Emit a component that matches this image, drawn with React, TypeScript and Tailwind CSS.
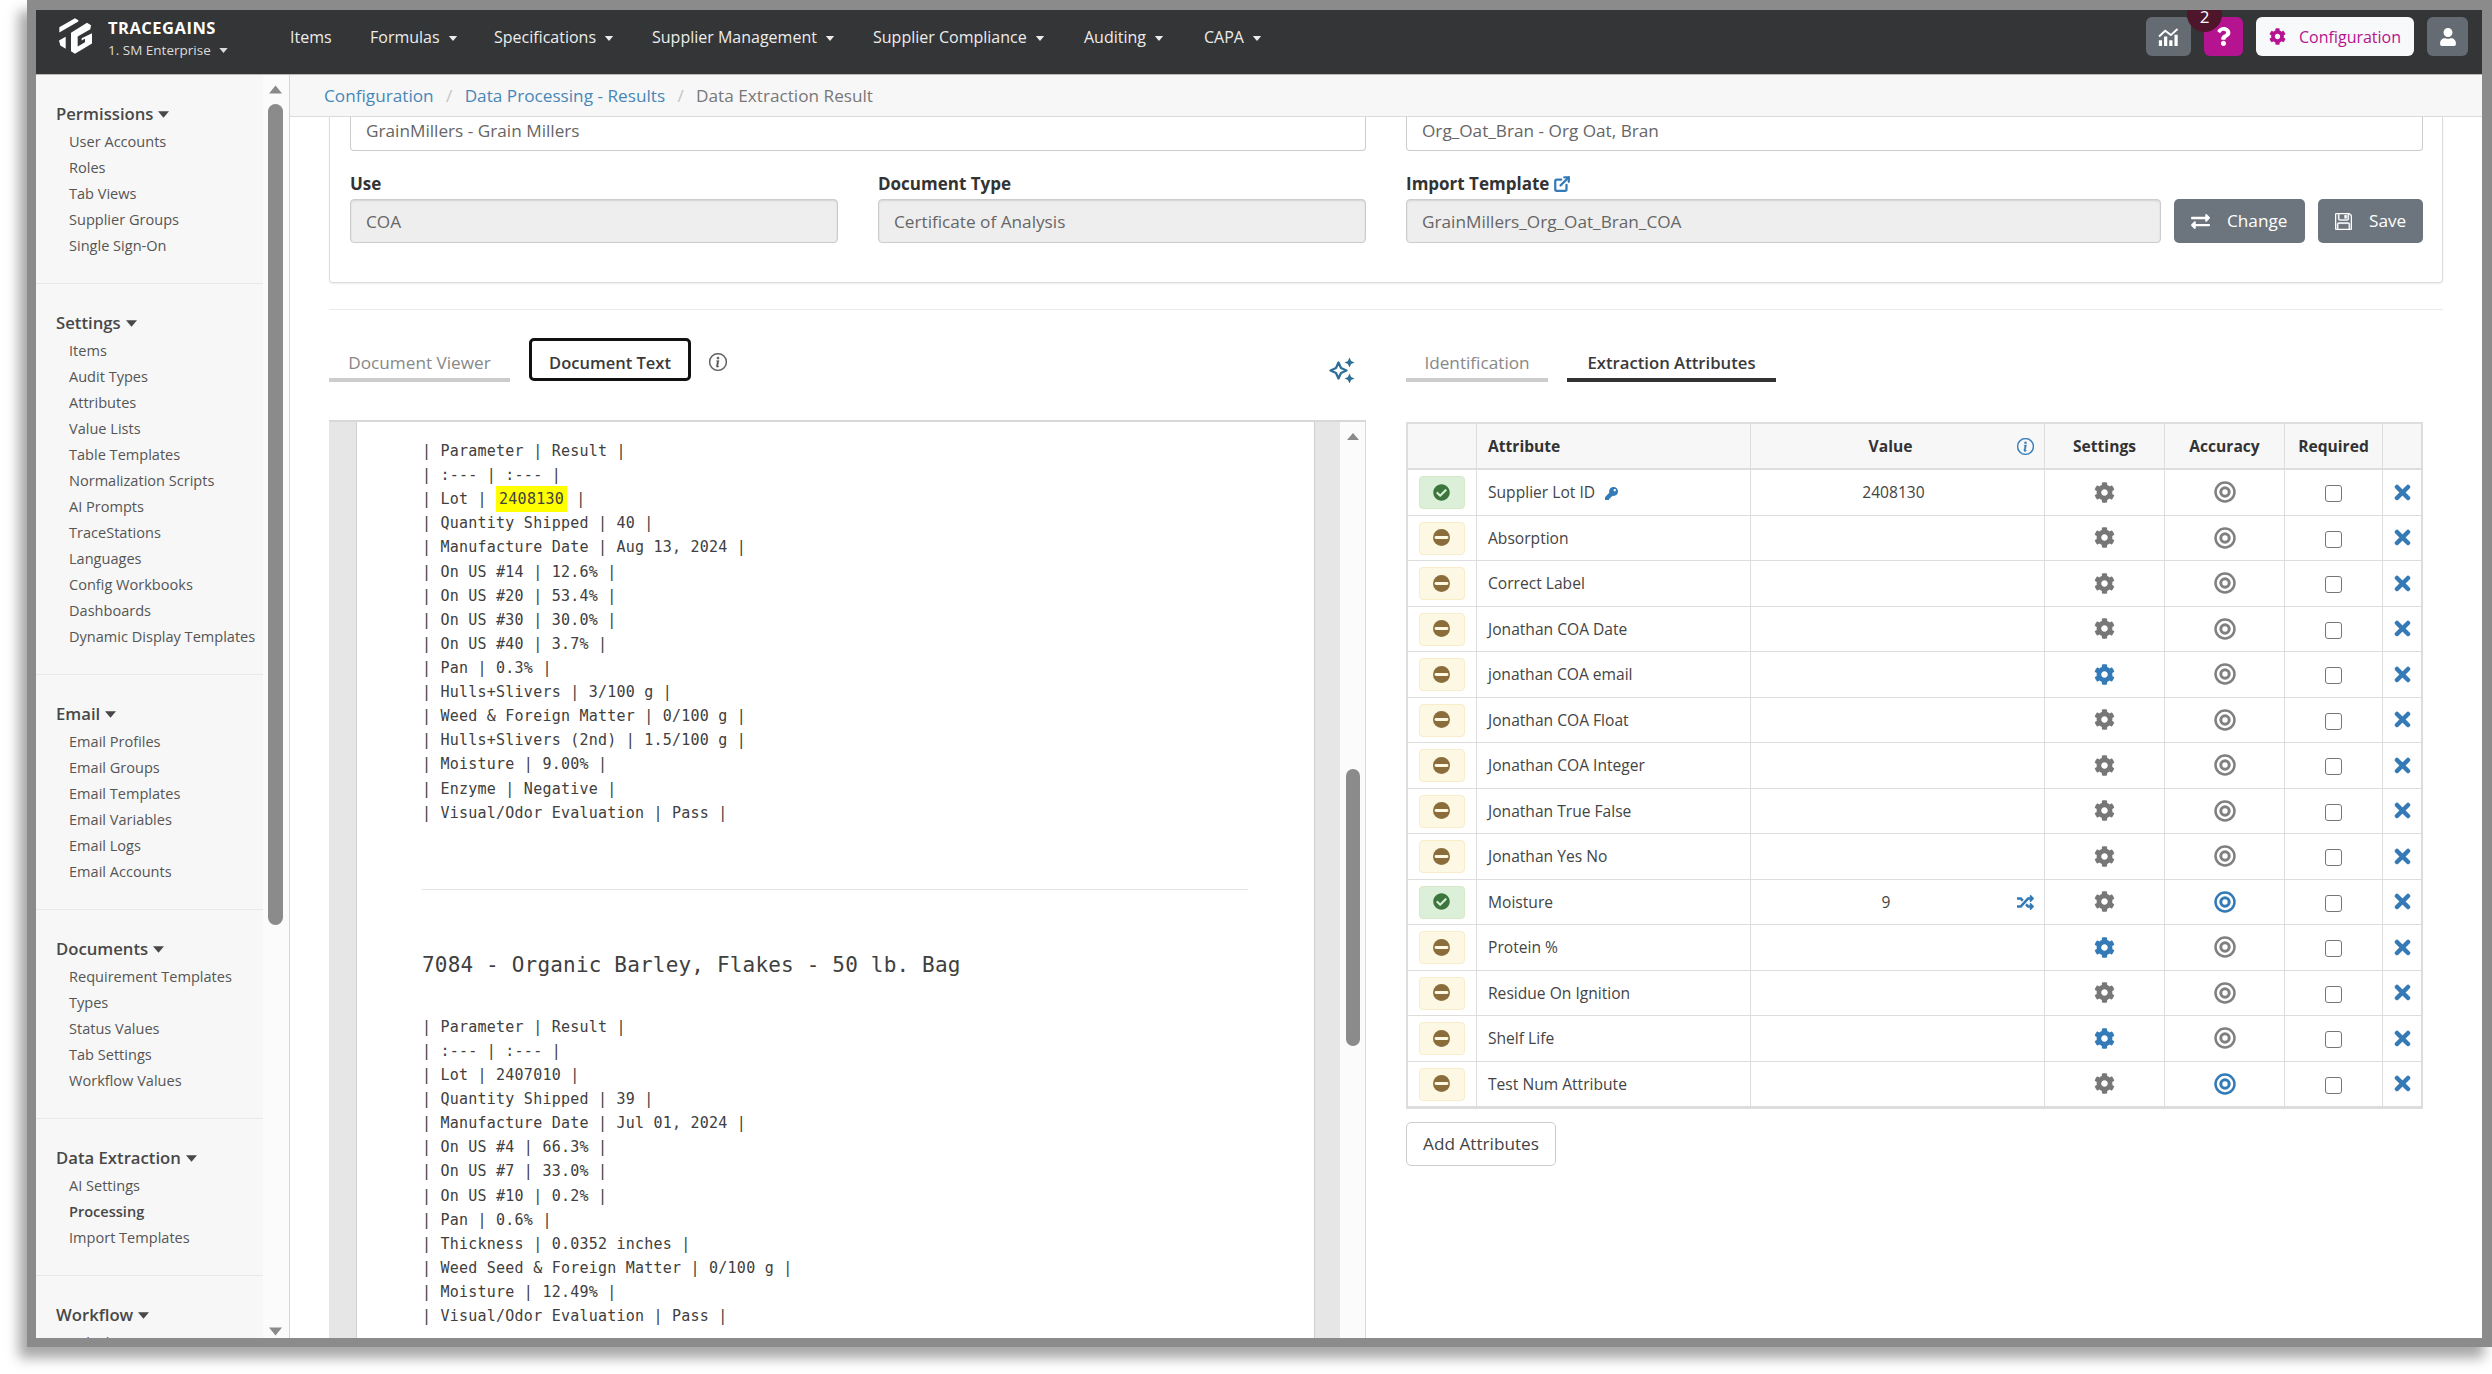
import { FaCog, FaCheckCircle, FaKey, FaQuestion, FaRandom, FaUser, FaExchangeAlt } from 'react-icons/fa'
import { BsFloppy, BsInfoCircle } from 'react-icons/bs'
import { FiExternalLink } from 'react-icons/fi'

const navItems = [
  { label: 'Items', caret: false, width: 'w-[80px]' },
  { label: 'Formulas', caret: true, width: 'w-[124px]' },
  { label: 'Specifications', caret: true, width: 'w-[158px]' },
  { label: 'Supplier Management', caret: true, width: 'w-[221px]' },
  { label: 'Supplier Compliance', caret: true, width: 'w-[211px]' },
  { label: 'Auditing', caret: true, width: 'w-[120px]' },
  { label: 'CAPA', caret: true, width: 'w-[80px]' },
]

const menu = [
  { title: 'Permissions', items: ['User Accounts', 'Roles', 'Tab Views', 'Supplier Groups', 'Single Sign-On'] },
  {
    title: 'Settings',
    items: [
      'Items',
      'Audit Types',
      'Attributes',
      'Value Lists',
      'Table Templates',
      'Normalization Scripts',
      'AI Prompts',
      'TraceStations',
      'Languages',
      'Config Workbooks',
      'Dashboards',
      'Dynamic Display Templates',
    ],
  },
  {
    title: 'Email',
    items: ['Email Profiles', 'Email Groups', 'Email Templates', 'Email Variables', 'Email Logs', 'Email Accounts'],
  },
  { title: 'Documents', items: ['Requirement Templates', 'Types', 'Status Values', 'Tab Settings', 'Workflow Values'] },
  { title: 'Data Extraction', items: ['AI Settings', 'Processing', 'Import Templates'] },
  { title: 'Workflow', items: ['Calculations'] },
]

const oatBranLines = [
  '| Quantity Shipped | 40 |',
  '| Manufacture Date | Aug 13, 2024 |',
  '| On US #14 | 12.6% |',
  '| On US #20 | 53.4% |',
  '| On US #30 | 30.0% |',
  '| On US #40 | 3.7% |',
  '| Pan | 0.3% |',
  '| Hulls+Slivers | 3/100 g |',
  '| Weed & Foreign Matter | 0/100 g |',
  '| Hulls+Slivers (2nd) | 1.5/100 g |',
  '| Moisture | 9.00% |',
  '| Enzyme | Negative |',
  '| Visual/Odor Evaluation | Pass |',
]

const barleyLines = [
  '| Parameter | Result |',
  '| :--- | :--- |',
  '| Lot | 2407010 |',
  '| Quantity Shipped | 39 |',
  '| Manufacture Date | Jul 01, 2024 |',
  '| On US #4 | 66.3% |',
  '| On US #7 | 33.0% |',
  '| On US #10 | 0.2% |',
  '| Pan | 0.6% |',
  '| Thickness | 0.0352 inches |',
  '| Weed Seed & Foreign Matter | 0/100 g |',
  '| Moisture | 12.49% |',
  '| Visual/Odor Evaluation | Pass |',
]

type Attribute = {
  name: string
  value?: string
  found?: boolean
  isKey?: boolean
  mapped?: boolean
  settingsOn?: boolean
  accuracyOn?: boolean
}

const attributes: Attribute[] = [
  { name: 'Supplier Lot ID', value: '2408130', found: true, isKey: true },
  { name: 'Absorption' },
  { name: 'Correct Label' },
  { name: 'Jonathan COA Date' },
  { name: 'jonathan COA email', settingsOn: true },
  { name: 'Jonathan COA Float' },
  { name: 'Jonathan COA Integer' },
  { name: 'Jonathan True False' },
  { name: 'Jonathan Yes No' },
  { name: 'Moisture', value: '9', found: true, mapped: true, accuracyOn: true },
  { name: 'Protein %', settingsOn: true },
  { name: 'Residue On Ignition' },
  { name: 'Shelf Life', settingsOn: true },
  { name: 'Test Num Attribute', accuracyOn: true },
]

const tableCols = 'grid grid-cols-[69px_274px_294px_120px_120px_98px_38px]'

function Caret({ className = '' }: { className?: string }) {
  return (
    <svg viewBox="0 0 10 6" className={className} fill="currentColor">
      <path d="M0 0h10L5 6z" />
    </svg>
  )
}

function Logo() {
  return (
    <svg viewBox="0 0 99 107" className="h-[36px] w-[33px]" fill="#fff">
      <path d="M1 27 48 0l10 6v4L1 43z" />
      <path d="M0 67 20 56v36L4 82z" />
      <path d="M36 44 84 14l12 7-2 12-38 22v30l22-13V62l-10 5V60l31-15v31L48 107l-12-8z" />
    </svg>
  )
}

function ChartIcon() {
  return (
    <svg viewBox="0 0 22 19" className="h-[18px] w-[21px]" fill="none" stroke="#fff">
      <path d="M1 9l6.500-6 6 4.500L20.500 1" strokeWidth="2" />
      <path d="M2.500 19v-6M8 19V9M13.500 19v-6M19 19V7" strokeWidth="3.400" />
    </svg>
  )
}

function Sparkles() {
  return (
    <svg viewBox="0 0 26 26" className="h-[26px] w-[26px] text-[#2f6f94]">
      <path d="M9.500 5.500 12 11l5.500 2.500L12 16l-2.500 5.500L7 16l-5.500-2.500L7 11z" fill="none" stroke="currentColor" strokeWidth="2.300" strokeLinejoin="round" />
      <path d="M20.500 0.500l1.600 3.400 3.400 1.600-3.400 1.600-1.600 3.400-1.600-3.400-3.400-1.600 3.400-1.600zM20.500 16.500l1.600 3.400 3.400 1.600-3.400 1.600-1.600 3.400-1.600-3.400-3.400-1.600 3.400-1.600z" fill="currentColor" />
    </svg>
  )
}

function MinusBadge() {
  return (
    <svg viewBox="0 0 17 17" className="h-[17px] w-[17px]">
      <circle cx="8.500" cy="8.500" r="8.500" fill="currentColor" />
      <path d="M3 8.500h11" stroke="#fcf8e3" strokeWidth="2.800" strokeLinecap="round" />
    </svg>
  )
}

function Target({ className }: { className: string }) {
  return (
    <svg viewBox="0 0 22 22" className={`h-[22px] w-[22px] ${className}`} fill="none" stroke="currentColor">
      <circle cx="11" cy="11" r="9.500" strokeWidth="2.500" />
      <circle cx="11" cy="11" r="4.200" strokeWidth="3" />
    </svg>
  )
}

function Remove() {
  return (
    <svg viewBox="0 0 16 16" className="h-[17px] w-[17px] text-[#337ab7]" stroke="currentColor" strokeWidth="4.200" strokeLinecap="round">
      <path d="M2.800 2.800l10.400 10.400M13.200 2.800L2.800 13.200" />
    </svg>
  )
}

function Header() {
  return (
    <header className="flex h-[65px] shrink-0 items-start border-b border-[#b9b9b9] bg-[#343536] text-white">
      <div className="flex w-[254px] pt-2 pl-[23px]">
        <Logo />
        <div className="pl-4">
          <p className="text-[16.500px] leading-[20px] font-bold tracking-[0.500px]">TRACEGAINS</p>
          <p className="flex items-center text-[13.500px] leading-[24px] text-[#dcdcdc]">
            1. SM Enterprise <Caret className="ml-[8px] h-[5px] w-[9px]" />
          </p>
        </div>
      </div>
      <nav className="flex pt-[14px]">
        {navItems.map((item) => (
          <a key={item.label} className={`flex items-center text-[16px] leading-[26px] whitespace-nowrap text-[#ececec] ${item.width}`}>
            {item.label}
            {item.caret && <Caret className="mt-[3px] ml-2 h-[5px] w-[10px]" />}
          </a>
        ))}
      </nav>
      <div className="ml-auto flex gap-[13px] pt-[7px] pr-[14px]">
        <button className="flex h-[39px] w-[45px] items-center justify-center rounded-[6px] bg-[#646b73]">
          <ChartIcon />
        </button>
        <div className="relative">
          <button className="flex h-[39px] w-[39px] items-center justify-center rounded-[6px] bg-[#b5138f]">
            <FaQuestion className="h-[19px] w-[19px]" />
          </button>
          <div className="absolute -top-[7px] -left-[17px] h-[22px] w-[35px] overflow-hidden">
            <div className="-mt-[13px] flex h-[35px] w-[35px] items-center justify-center rounded-full bg-[#4f152b] pt-[5px] text-[17px]">2</div>
          </div>
        </div>
        <button className="flex h-[39px] w-[158px] items-center rounded-[6px] bg-[#f8f9fa] pl-[13px] text-[16px] text-[#b5138f]">
          <FaCog className="mr-[13px] h-[17px] w-[17px]" />
          Configuration
        </button>
        <button className="flex h-[39px] w-[41px] items-center justify-center rounded-[6px] bg-[#646b73]">
          <FaUser className="h-[18px] w-[18px]" />
        </button>
      </div>
    </header>
  )
}

function Sidebar() {
  return (
    <aside className="flex w-[254px] shrink-0 border-r border-[#d5d5d5] bg-[#fbfbfb]">
      <div className="w-[227px] overflow-hidden bg-[#f7f7f7]">
        {menu.map((section) => (
          <section key={section.title} className="border-b border-[#e9e9e9] pt-[26px] pb-[25px] text-[#484848]">
            <h3 className="flex h-[27px] items-center pb-px pl-[20px] text-[16.700px] font-semibold whitespace-nowrap">
              {section.title}
              <Caret className="ml-[5px] h-[7px] w-[11px]" />
            </h3>
            {section.items.map((item) => (
              <a
                key={item}
                className={`block h-[26px] pl-[33px] text-[14.550px] leading-[26px] whitespace-nowrap ${item === 'Processing' ? 'font-semibold' : 'text-[#555]'}`}
              >
                {item}
              </a>
            ))}
          </section>
        ))}
      </div>
      <div className="flex flex-1 flex-col items-center pt-[10px] pr-px pb-[2px]">
        <Caret className="h-[9px] w-[13px] rotate-180 text-[#8a8a8a]" />
        <div className="mt-[10px] h-[821px] w-[15px] rounded-full bg-[#8b8b8b]" />
        <Caret className="mt-auto h-[9px] w-[13px] text-[#8a8a8a]" />
      </div>
    </aside>
  )
}

function Breadcrumb() {
  return (
    <div className="flex h-[42px] items-center border-b border-[#dcdcdc] bg-[#f7f7f7] pl-[34px] text-[17.200px] text-[#777]">
      <a className="text-[#4787b8]">Configuration</a>
      <span className="w-[31px] text-center text-[#c4c4c4]">/</span>
      <a className="text-[#4787b8]">Data Processing - Results</a>
      <span className="w-[31px] text-center text-[#c4c4c4]">/</span>
      <span>Data Extraction Result</span>
    </div>
  )
}

const readOnly = 'mt-[2px] flex h-[44px] items-center rounded-[4px] border border-[#ccc] bg-[#eee] px-[15px] pt-px text-[17.200px] text-[#666] shadow-[inset_0_1px_2px_rgba(0,0,0,0.12)]'
const openField = 'h-[34px] rounded-b-[4px] border border-t-0 border-[#ccc] px-[15px] text-[17.200px] leading-[27px] text-[#666]'
const actionButton = 'mt-[2px] flex h-[44px] items-center rounded-[5px] bg-[#6c757d] text-[17.200px] text-white'

function DocumentForm() {
  return (
    <div className="h-[166px] rounded-b-[4px] border border-t-0 border-[#ddd] px-5 shadow-[0_1px_2px_rgba(0,0,0,0.08)]">
      <div className="grid grid-cols-[1016px_1017px] gap-10">
        <div className={openField}>GrainMillers - Grain Millers</div>
        <div className={openField}>Org_Oat_Bran - Org Oat, Bran</div>
      </div>
      <div className="mt-5 grid grid-cols-[488px_488px_1017px] gap-10 text-[#333]">
        <div>
          <label className="block h-[26px] text-[17px] leading-[26px] font-bold">Use</label>
          <div className={readOnly}>COA</div>
        </div>
        <div>
          <label className="block h-[26px] text-[17px] leading-[26px] font-bold">Document Type</label>
          <div className={readOnly}>Certificate of Analysis</div>
        </div>
        <div>
          <label className="flex h-[26px] items-center text-[17px] leading-[26px] font-bold">
            Import Template <FiExternalLink className="ml-[4px] h-[18px] w-[18px] text-[#337ab7]" strokeWidth={3} />
          </label>
          <div className="flex gap-[13px]">
            <div className={`${readOnly} flex-1`}>GrainMillers_Org_Oat_Bran_COA</div>
            <div className={`${actionButton} w-[131px] pl-[17px]`}>
              <FaExchangeAlt className="mr-[17px] h-[19px] w-[19px]" />
              Change
            </div>
            <div className={`${actionButton} w-[105px] pl-[17px]`}>
              <BsFloppy className="mr-[17px] h-[17px] w-[17px]" strokeWidth={0.4} />
              Save
            </div>
          </div>
        </div>
      </div>
    </div>
  )
}

function DocumentText() {
  return (
    <div className="w-[1037px]">
      <div className="flex h-[110px] items-start pt-[28px] text-[17.200px]">
        <div className="h-[44px] w-[181px] border-b-4 border-[#ccc] pt-[12px] text-center leading-[26px] text-[#888]">Document Viewer</div>
        <div className="ml-[19px] h-[43px] w-[162px] rounded-[5px] border-[3px] border-[#111] pt-[9px] text-center text-[16.500px] leading-[26px] font-semibold text-[#3a3a3a]">
          Document Text
        </div>
        <BsInfoCircle className="mt-[15px] ml-[18px] h-[18px] w-[18px] text-[#555]" strokeWidth={0.3} />
        <div className="mt-[19px] mr-[11px] ml-auto">
          <Sparkles />
        </div>
      </div>
      <div className="flex h-[919px] border-t-2 border-r border-[#d8d8d8] bg-[#e6e6e6]">
        <div className="ml-[27px] w-[959px] border-x border-[#d0d0d0] bg-white pt-[17px] pr-[66px] pl-[65px] font-['DejaVu_Sans_Mono','Liberation_Mono',monospace] text-[15px] leading-[24.110px] tracking-[0.230px] whitespace-pre text-[#404040]">
          <p>| Parameter | Result |</p>
          <p>| :--- | :--- |</p>
          <p>
            {'| Lot | '}
            <mark className="bg-[#ff0] px-[3px] py-[4px] text-[#404040]">2408130</mark>
            {' |'}
          </p>
          {oatBranLines.map((line) => (
            <p key={line}>{line}</p>
          ))}
          <hr className="mt-[64px] border-[#e4e4e4]" />
          <h4 className="mt-[60px] mb-[35px] text-[21px] leading-[30px] tracking-[0.180px]">7084 - Organic Barley, Flakes - 50 lb. Bag</h4>
          {barleyLines.map((line) => (
            <p key={line}>{line}</p>
          ))}
        </div>
        <div className="ml-auto flex w-[25px] flex-col items-center bg-[#fbfbfb] pt-[10px]">
          <Caret className="h-[9px] w-[12px] rotate-180 text-[#8a8a8a]" />
          <div className="mt-[328px] h-[277px] w-[14px] rounded-full bg-[#8b8b8b]" />
        </div>
      </div>
    </div>
  )
}

function AttributeRow({ attribute }: { attribute: Attribute }) {
  return (
    <div className={`${tableCols} h-[45.500px] divide-x divide-[#ddd] border-b border-[#ddd]`}>
      <div className="pt-[6px] pl-[11px]">
        <div
          className={`flex h-[33px] w-[46px] items-center justify-center rounded-[4px] border pr-[2px] pb-px ${
            attribute.found ? 'border-[#d6e9c6] bg-[#dcefd9] text-[#3c763d]' : 'border-[#f8ecc9] bg-[#fcf8e3] text-[#8a6d3b]'
          }`}
        >
          {attribute.found ? <FaCheckCircle className="h-[17px] w-[17px]" /> : <MinusBadge />}
        </div>
      </div>
      <div className="flex items-center pt-px pl-[11px]">
        {attribute.name}
        {attribute.isKey && <FaKey className="mt-[2px] ml-[10px] h-[13px] w-[13px] text-[#337ab7]" />}
      </div>
      <div className="flex items-center pt-px">
        <span className={`flex-1 text-center ${attribute.mapped ? 'pl-[4px]' : 'pr-[8px]'}`}>{attribute.value}</span>
        {attribute.mapped && <FaRandom className="mr-[10px] h-[17px] w-[17px] text-[#337ab7]" />}
      </div>
      <div className="flex items-center justify-center">
        <FaCog className={`h-[21px] w-[21px] ${attribute.settingsOn ? 'text-[#337ab7]' : 'text-[#777]'}`} />
      </div>
      <div className="flex items-center justify-center">
        <Target className={attribute.accuracyOn ? 'text-[#337ab7]' : 'text-[#808080]'} />
      </div>
      <div className="flex items-center justify-center pt-[3px]">
        <span className="h-[17px] w-[17px] rounded-[3px] border border-[#767676] bg-white" />
      </div>
      <div className="flex items-center justify-center">
        <Remove />
      </div>
    </div>
  )
}

function ExtractionAttributes() {
  return (
    <div className="w-[1017px]">
      <div className="flex h-[112px] items-start pt-[28px] text-[17.200px]">
        <div className="h-[44px] w-[142px] border-b-4 border-[#ccc] pt-[12px] text-center leading-[26px] text-[#888]">Identification</div>
        <div className="ml-[19px] h-[44px] w-[209px] border-b-4 border-[#333] pt-[12px] text-center text-[16.700px] leading-[26px] font-semibold whitespace-nowrap text-[#3a3a3a]">
          Extraction Attributes
        </div>
      </div>
      <div className="border-2 border-[#ddd] text-[15.600px] text-[#444]">
        <div className={`${tableCols} h-[46px] items-stretch divide-x divide-[#ddd] border-b-2 border-[#ddd] bg-[#f7f7f7] font-bold text-[#333]`}>
          <div />
          <div className="flex items-center pt-px pl-[11px]">Attribute</div>
          <div className="flex items-center pt-px">
            <span className="flex-1 pl-[13px] text-center">Value</span>
            <BsInfoCircle className="mr-[10px] h-[17px] w-[17px] text-[#337ab7]" strokeWidth={0.4} />
          </div>
          <div className="flex items-center justify-center pt-px">Settings</div>
          <div className="flex items-center justify-center pt-px">Accuracy</div>
          <div className="flex items-center justify-center pt-px">Required</div>
          <div />
        </div>
        {attributes.map((attribute) => (
          <AttributeRow key={attribute.name} attribute={attribute} />
        ))}
      </div>
      <button className="mt-[13px] h-[44px] w-[150px] rounded-[5px] border border-[#ccc] bg-white text-[17.200px] text-[#444]">Add Attributes</button>
    </div>
  )
}

export default function App() {
  return (
    <div className="h-[1374px] w-[2492px] overflow-hidden bg-white pl-[27px] font-['Open_Sans','Noto_Sans',sans-serif]">
      <div className="flex h-[1347px] w-[2465px] flex-col border-t-[10px] border-r-[10px] border-b-[9px] border-l-[9px] border-[#8b8b8b] bg-white shadow-[-8px_11px_12px_rgba(0,0,0,0.35)]">
        <Header />
        <div className="flex min-h-0 flex-1">
          <Sidebar />
          <main className="min-w-0 flex-1 overflow-hidden">
            <Breadcrumb />
            <div className="pr-[39px] pl-[39px]">
              <DocumentForm />
              <hr className="mt-[26px] border-[#eaeaea]" />
              <div className="flex gap-10">
                <DocumentText />
                <ExtractionAttributes />
              </div>
            </div>
          </main>
        </div>
      </div>
    </div>
  )
}
